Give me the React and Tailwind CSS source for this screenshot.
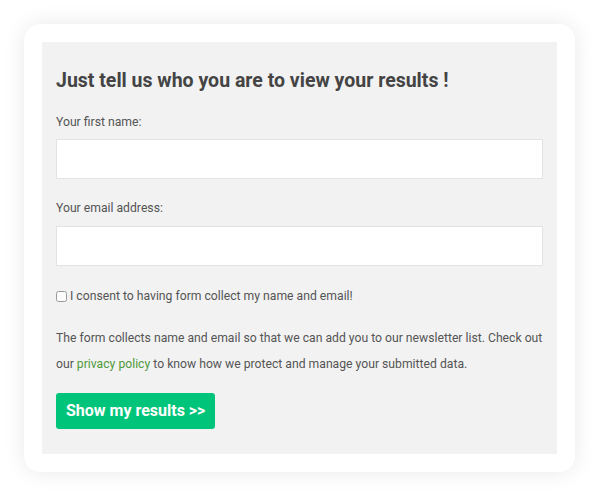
import React from 'react'

export default function App() {
  return (
    <div className="w-[599px] h-[496px] bg-white p-[24px] font-['Roboto','Liberation_Sans',sans-serif]">
      <div className="h-[448px] rounded-[16px] bg-white p-[18px] shadow-[0_0_22px_rgba(0,0,0,0.09)]">
        <form
          className="h-[412px] bg-[#f2f2f2] pl-[14px] pr-[14px] pt-[25px] text-[#555]"
          onSubmit={(e) => e.preventDefault()}
        >
          <h2 className="text-[19.5px] leading-[28px] font-bold text-[#444]">
            Just tell us who you are to view your results !
          </h2>

          <label className="mt-[18px] block text-[12.2px] leading-[18px]">Your first name:</label>
          <input
            type="text"
            className="mt-[8px] block h-[40px] w-full border-[1.5px] border-[#e3e3e3] bg-white outline-none"
          />

          <label className="mt-[20px] block text-[12.2px] leading-[18px]">Your email address:</label>
          <input
            type="email"
            className="mt-[9px] block h-[40px] w-full border-[1.5px] border-[#e3e3e3] bg-white outline-none"
          />

          <label className="mt-[21px] flex items-center gap-[3px] text-[12.2px] leading-[18px]">
            <input type="checkbox" className="h-[11px] w-[11px] m-0 opacity-70" />
            I consent to having form collect my name and email!
          </label>

          <p className="mt-[20px] text-[12.2px] leading-[26px]">
            The form collects name and email so that we can add you to our newsletter list. Check out our{' '}
            <a href="#" className="text-[#4f9a3a]">privacy policy</a> to know how we protect and manage your
            submitted data.
          </p>

          <button
            type="submit"
            className="mt-[16px] h-[36px] rounded-[3px] bg-[#00c479] px-[10px] text-[16px] font-bold text-white"
          >
            Show my results &gt;&gt;
          </button>
        </form>
      </div>
    </div>
  )
}
